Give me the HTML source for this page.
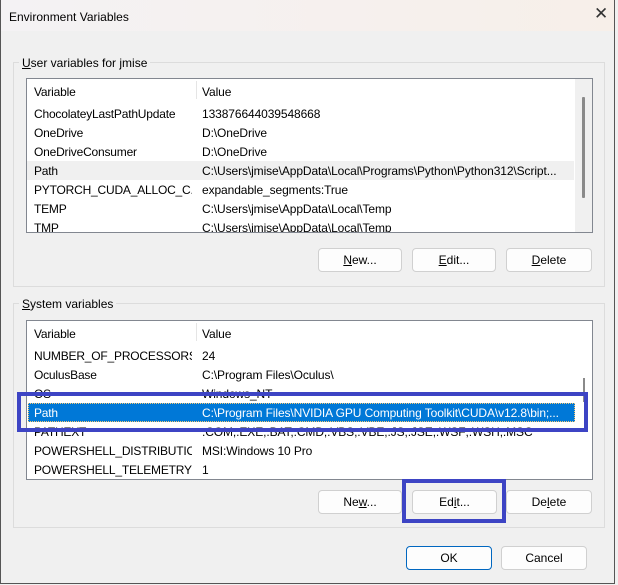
<!DOCTYPE html>
<html><head><style>
body{margin:0;width:618px;height:585px;background:#f0f0f0;font-family:"Liberation Sans",sans-serif;font-size:12px;color:#000;position:relative;overflow:hidden}
.a{position:absolute}
.win{left:0;top:0;width:615px;height:584px;border-left:1px solid #555;border-right:1px solid #555;border-bottom:1px solid #555;box-sizing:border-box}
.title{left:1px;top:0;width:613px;height:31px;background:linear-gradient(90deg,#f4f2f4,#f7efe9)}
.grp{border:1px solid #dcdcdc;box-sizing:border-box}
.lbl{background:#f0f0f0;padding:0 3px}
.list{background:#fff;border:1px solid #828790;box-sizing:border-box;overflow:hidden}
.row{position:absolute;left:0;height:19px;line-height:21px;width:547px;white-space:nowrap}
.row span{position:absolute}
.c1{left:7px;width:158px;overflow:hidden;letter-spacing:-0.2px}.c2{left:175px;letter-spacing:-0.1px}
.sb{background:#f0f0f0}
.btn{background:#fdfdfd;border:1px solid #d0d0d0;border-radius:4px;box-sizing:border-box;text-align:center;line-height:22px}
.hl{position:absolute;border:4px solid #3d44c4;box-sizing:border-box}
u{text-decoration:underline}
</style></head><body>
<div class="a title"></div>
<div class="a win"></div>
<div class="a" style="left:9px;top:10px">Environment Variables</div>
<div class="a" style="left:594px;top:4px;font-size:17px;color:#333;font-weight:300">✕</div>

<div class="a grp" style="left:13px;top:62px;width:592px;height:225px"></div>
<div class="a lbl" style="left:19px;top:56px"><u>U</u>ser variables for jmise</div>
<div class="a list" style="left:26px;top:78px;width:567px;height:155px">
 <div class="row" style="top:2px;height:20px;line-height:22px"><span class="c1">Variable</span><span class="c2">Value</span></div>
 <div class="a" style="left:169px;top:2px;width:1px;height:18px;background:#e5e5e5"></div>
 <div class="row" style="top:25px"><span class="c1">ChocolateyLastPathUpdate</span><span class="c2">133876644039548668</span></div>
 <div class="row" style="top:44px"><span class="c1">OneDrive</span><span class="c2">D:\OneDrive</span></div>
 <div class="row" style="top:63px"><span class="c1">OneDriveConsumer</span><span class="c2">D:\OneDrive</span></div>
 <div class="row" style="top:82px;background:#f0f0f0"><span class="c1">Path</span><span class="c2">C:\Users\jmise\AppData\Local\Programs\Python\Python312\Script...</span></div>
 <div class="row" style="top:101px"><span class="c1">PYTORCH_CUDA_ALLOC_C...</span><span class="c2">expandable_segments:True</span></div>
 <div class="row" style="top:120px"><span class="c1">TEMP</span><span class="c2">C:\Users\jmise\AppData\Local\Temp</span></div>
 <div class="row" style="top:139px"><span class="c1">TMP</span><span class="c2">C:\Users\jmise\AppData\Local\Temp</span></div>
 <div class="a sb" style="left:548px;top:0;width:17px;height:153px"></div>
 <div class="a" style="left:555px;top:18px;width:3px;height:101px;background:#8a8a8a;border-radius:1px"></div>
</div>
<div class="a btn" style="left:318px;top:248px;width:84px;height:24px"><u>N</u>ew...</div>
<div class="a btn" style="left:412px;top:248px;width:84px;height:24px"><u>E</u>dit...</div>
<div class="a btn" style="left:506px;top:248px;width:86px;height:24px"><u>D</u>elete</div>

<div class="a grp" style="left:13px;top:303px;width:592px;height:225px"></div>
<div class="a lbl" style="left:19px;top:297px"><u>S</u>ystem variables</div>
<div class="a list" style="left:26px;top:320px;width:567px;height:160px">
 <div class="row" style="top:2px;height:20px;line-height:22px"><span class="c1">Variable</span><span class="c2">Value</span></div>
 <div class="a" style="left:169px;top:2px;width:1px;height:18px;background:#e5e5e5"></div>
 <div class="row" style="top:25px"><span class="c1">NUMBER_OF_PROCESSORS</span><span class="c2">24</span></div>
 <div class="row" style="top:44px"><span class="c1">OculusBase</span><span class="c2">C:\Program Files\Oculus\</span></div>
 <div class="row" style="top:63px"><span class="c1">OS</span><span class="c2">Windows_NT</span></div>
 <div class="row" style="top:82px;background:#0078d7;color:#fff;left:1px;width:547px;outline:1px dotted #f7c873;outline-offset:-1px"><span class="c1" style="left:6px">Path</span><span class="c2" style="left:174px">C:\Program Files\NVIDIA GPU Computing Toolkit\CUDA\v12.8\bin;...</span></div>
 <div class="row" style="top:101px"><span class="c1">PATHEXT</span><span class="c2">.COM;.EXE;.BAT;.CMD;.VBS;.VBE;.JS;.JSE;.WSF;.WSH;.MSC</span></div>
 <div class="row" style="top:120px"><span class="c1">POWERSHELL_DISTRIBUTIO...</span><span class="c2">MSI:Windows 10 Pro</span></div>
 <div class="row" style="top:139px"><span class="c1">POWERSHELL_TELEMETRY ...</span><span class="c2">1</span></div>
 <div class="a" style="left:556px;top:57px;width:2px;height:24px;background:#8a8a8a"></div>
</div>
<div class="a btn" style="left:318px;top:490px;width:84px;height:24px">Ne<u>w</u>...</div>
<div class="a btn" style="left:412px;top:490px;width:85px;height:24px">Ed<u>i</u>t...</div>
<div class="a btn" style="left:506px;top:490px;width:86px;height:24px">De<u>l</u>ete</div>

<div class="hl" style="left:17px;top:392px;width:571px;height:40px"></div>
<div class="hl" style="left:402px;top:479px;width:104px;height:44px"></div>

<div class="a btn" style="left:406px;top:546px;width:86px;height:24px;border-color:#0067c0">OK</div>
<div class="a btn" style="left:501px;top:546px;width:86px;height:24px">Cancel</div>
</body></html>
